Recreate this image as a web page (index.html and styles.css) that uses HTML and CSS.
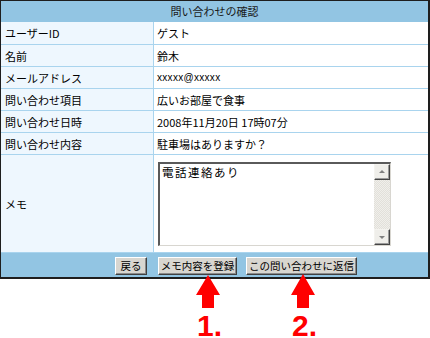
FILE: index.html
```html
<!DOCTYPE html>
<html lang="ja">
<head>
<meta charset="utf-8">
<title>問い合わせの確認</title>
<link rel="stylesheet" href="styles.css">
</head>
<body>
<div class="page">
  <div class="frame">
    <div class="title">問い合わせの確認</div>
    <div class="grid">
      <div class="label">ユーザーID</div><div class="value">ゲスト</div>
      <div class="label">名前</div><div class="value">鈴木</div>
      <div class="label">メールアドレス</div><div class="value small">xxxxx@xxxxx</div>
      <div class="label">問い合わせ項目</div><div class="value">広いお部屋で食事</div>
      <div class="label">問い合わせ日時</div><div class="value">2008年11月20日 17時07分</div>
      <div class="label">問い合わせ内容</div><div class="value">駐車場はありますか？</div>
      <div class="label">メモ</div>
      <div class="value memo-cell">
        <div class="memo">
          <textarea class="memo-text" readonly>電話連絡あり</textarea>
          <div class="scrollbar">
            <div class="sb-btn"><svg width="14" height="14" viewBox="0 0 14 14"><polygon points="4,8 10,8 7,5" fill="#808080"/></svg></div>
            <div class="sb-track"></div>
            <div class="sb-btn"><svg width="14" height="14" viewBox="0 0 14 14"><polygon points="4,6 10,6 7,9" fill="#808080"/></svg></div>
          </div>
        </div>
      </div>
    </div>
    <div class="buttons">
      <button class="btn b1" type="button">戻る</button>
      <button class="btn b2" type="button">メモ内容を登録</button>
      <button class="btn b3" type="button">この問い合わせに返信</button>
    </div>
  </div>
  <div class="note n1">
    <svg width="24" height="34" viewBox="0 0 24 34"><polygon points="12,0 24,20 18,20 18,33 6,33 6,20 0,20" fill="#ff0000"/></svg>
    <span>1.</span>
  </div>
  <div class="note n2">
    <svg width="24" height="35" viewBox="0 0 24 35"><polygon points="12,0 24,21 18,21 18,34 6,34 6,21 0,21" fill="#ff0000"/></svg>
    <span>2.</span>
  </div>
</div>
</body>
</html>
```

FILE: styles.css
```css
html, body {
  margin: 0;
  padding: 0;
  background: #ffffff;
}
body {
  font-family: "Noto Sans CJK JP", "DejaVu Sans", sans-serif;
  font-size: 11px;
  color: #000;
}
.page {
  position: relative;
  width: 430px;
  height: 338px;
}
.frame {
  width: 427px;
  border-top: 1px solid #1e1e1e;
  border-left: 1px solid #1e1e1e;
  border-right: 2px solid #1e1e1e;
  border-bottom: 2px solid #1e1e1e;
  background: #a9d4ee;
}
.title {
  height: 21px;
  line-height: 21px;
  text-align: center;
  background: #92c5e3;
  color: #1a1a1a;
  font-size: 11px;
}
.grid {
  display: grid;
  grid-template-columns: 152px 274px;
  grid-template-rows: 22px repeat(5, 21px) 97px;
  column-gap: 1px;
  row-gap: 1px;
  background: #a9d4ee;
  border-bottom: 1px solid #a9d4ee;
}
.label {
  background: #eef7fe;
  padding-left: 4px;
  display: flex;
  align-items: center;
  white-space: nowrap;
}
.value {
  background: #ffffff;
  padding-left: 3px;
  display: flex;
  align-items: center;
  white-space: nowrap;
}
.small {
  font-family: "Liberation Sans", sans-serif;
  font-size: 10px;
  letter-spacing: 0.3px;
}
.memo-cell {
  padding-left: 4px;
}
.memo {
  display: flex;
  width: 230px;
  height: 81px;
  border-top: 2px solid #5a5a5a;
  border-left: 2px solid #5a5a5a;
  border-right: 1px solid #d8d6d0;
  border-bottom: 1px solid #d8d6d0;
  background: #fff;
}
.memo-text {
  flex: 1;
  border: none;
  outline: none;
  resize: none;
  margin: 0;
  padding: 1px 2px;
  font-family: "Noto Sans CJK JP", sans-serif;
  font-size: 11.5px;
  letter-spacing: 1.5px;
  line-height: 14px;
  color: #000;
  background: #fff;
  overflow: hidden;
}
.scrollbar {
  width: 16px;
  display: flex;
  flex-direction: column;
}
.sb-btn {
  height: 16px;
  box-sizing: border-box;
  background: #efeeea;
  border-top: 1px solid #f4f3ef;
  border-left: 1px solid #f4f3ef;
  border-right: 1px solid #444;
  border-bottom: 1px solid #444;
  box-shadow: inset -1px -1px 0 #9a9a9a;
  display: flex;
  align-items: center;
  justify-content: center;
}
.sb-btn svg {
  display: block;
}
.sb-track {
  flex: 1;
  background-color: #f0efeb;
  background-image:
    linear-gradient(45deg, #e2e0da 25%, transparent 25%, transparent 75%, #e2e0da 75%),
    linear-gradient(45deg, #e2e0da 25%, transparent 25%, transparent 75%, #e2e0da 75%);
  background-size: 2px 2px;
  background-position: 0 0, 1px 1px;
}
.buttons {
  height: 24px;
  box-sizing: border-box;
  background: #92c5e3;
  display: flex;
  align-items: flex-start;
  padding: 4px 0 0 114px;
}
.btn {
  height: 18px;
  box-sizing: border-box;
  margin: 0;
  padding: 0;
  font-family: "Noto Sans CJK JP", sans-serif;
  font-size: 10.5px;
  line-height: 14px;
  color: #000;
  background: #d8d6d0;
  border-top: 1px solid #ffffff;
  border-left: 1px solid #ffffff;
  border-right: 1px solid #404040;
  border-bottom: 1px solid #404040;
  box-shadow: inset -1px -1px 0 #8a8a8a;
  white-space: nowrap;
}
.b1 { width: 32px; }
.b2 { width: 79px; margin-left: 11px; }
.b3 { width: 111px; margin-left: 9px; }
.note {
  position: absolute;
  display: flex;
  flex-direction: column;
  align-items: center;
  color: #ff0000;
}
.note svg {
  display: block;
}
.note span {
  font-family: "Liberation Sans", sans-serif;
  font-weight: bold;
  font-size: 30px;
  line-height: 22px;
  margin-top: 6px;
  margin-left: 4px;
}
.n1 {
  left: 193px;
  top: 275px;
}
.n2 {
  left: 288px;
  top: 274px;
}
```
